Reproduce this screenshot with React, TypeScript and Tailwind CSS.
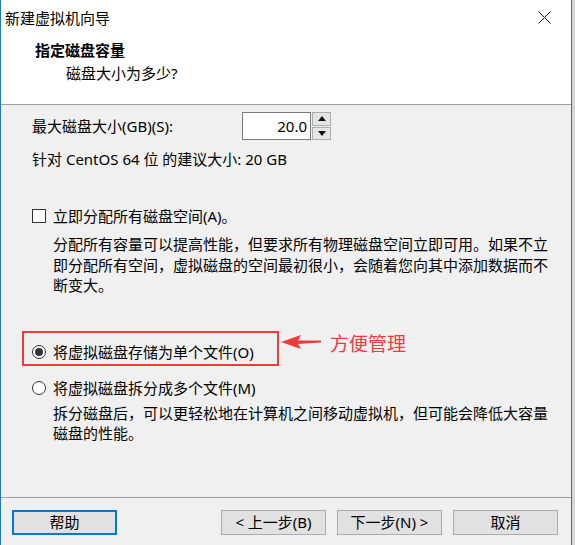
import React from 'react';

const font = { fontFamily: '"Noto Sans", "Noto Sans CJK SC", sans-serif' };

function Btn({ children, primary }: { children: React.ReactNode; primary?: boolean }) {
  return (
    <div
      className={
        'flex h-[25px] w-[105px] items-center justify-center bg-[#e1e1e1] text-[15px] leading-none text-black ' +
        (primary ? 'border-2 border-[#0078d7]' : 'border border-[#adadad]')
      }
    >
      {children}
    </div>
  );
}

function Radio({ checked }: { checked?: boolean }) {
  return (
    <span className="flex h-[14px] w-[14px] shrink-0 items-center justify-center rounded-full border border-[#333] bg-white">
      {checked && <span className="h-[8px] w-[8px] rounded-full bg-[#333]" />}
    </span>
  );
}

export default function App() {
  return (
    <div className="h-[545px] w-[575px] bg-[#d6d6d6]" style={font}>
      <div className="flex h-[545px] w-[572px] flex-col border-x border-[#1979ca] bg-[#f0f0f0]">
        {/* header */}
        <div className="h-[105px] shrink-0 border-b border-[#a0a0a0] bg-white">
          <div className="flex h-[36px] items-center justify-between pl-[4px] pr-[20px]">
            <span className="text-[15px] leading-none text-black">新建虚拟机向导</span>
            <svg width="13" height="13" viewBox="0 0 13 13" className="mt-[-2px]">
              <path d="M0.5 0.5 L12.5 12.5 M12.5 0.5 L0.5 12.5" stroke="#111" strokeWidth="1" />
            </svg>
          </div>
          <div className="mt-[4px] pl-[34px] text-[15px] font-bold leading-[20px] text-black">指定磁盘容量</div>
          <div className="mt-[3px] pl-[65px] text-[15px] leading-[20px] text-black">磁盘大小为多少?</div>
        </div>

        {/* body */}
        <div className="relative flex-1 pl-[31px] text-[15px] leading-[20px] text-black">
          <div className="mt-[7px] flex h-[28px] items-center">
            <span className="w-[210px]">最大磁盘大小(GB)(S):</span>
            <div className="flex h-[28px] w-[69px] items-center justify-end border border-[#7a7a7a] bg-white pr-[3px]">
              20.0
            </div>
            <div className="ml-[1px] flex h-[28px] w-[19px] flex-col gap-[1px]">
              <div className="flex flex-1 items-center justify-center border border-[#adadad] bg-[#e5e5e5]">
                <svg width="8" height="5" viewBox="0 0 8 5"><path d="M0 5 L4 0 L8 5 Z" fill="#111" /></svg>
              </div>
              <div className="flex flex-1 items-center justify-center border border-[#adadad] bg-[#e5e5e5]">
                <svg width="8" height="5" viewBox="0 0 8 5"><path d="M0 0 L4 5 L8 0 Z" fill="#111" /></svg>
              </div>
            </div>
          </div>
          <div className="mt-[9px]">针对 CentOS 64 位 的建议大小: 20 GB</div>

          <div className="mt-[37px] flex items-center gap-[7px]">
            <span className="h-[14px] w-[14px] shrink-0 border border-[#333] bg-white" />
            <span>立即分配所有磁盘空间(A)。</span>
          </div>
          <p className="mt-[8px] pl-[21px] leading-[20.5px]">
            分配所有容量可以提高性能，但要求所有物理磁盘空间立即可用。如果不立
            <br />
            即分配所有空间，虚拟磁盘的空间最初很小，会随着您向其中添加数据而不
            <br />
            断变大。
          </p>

          <div className="relative mt-[46px] flex items-center gap-[7px]">
            <Radio checked />
            <span>将虚拟磁盘存储为单个文件(O)</span>
            <div className="pointer-events-none absolute left-[-10px] top-[-11px] h-[35px] w-[257px] border-2 border-[#f23a3a]" />
            <svg
              className="absolute left-[248px] top-[-9px]"
              width="42"
              height="20"
              viewBox="0 0 42 20"
            >
              <polygon points="1,9 21,2 18,7.5 41,7.5 41,9.5 18,11 21,16" fill="#f23a3a" />
            </svg>
            <span className="absolute left-[298px] top-[-10px] text-[19px] leading-[24px] text-[#f03a3a]">
              方便管理
            </span>
          </div>

          <div className="mt-[16px] flex items-center gap-[7px]">
            <Radio />
            <span>将虚拟磁盘拆分成多个文件(M)</span>
          </div>
          <p className="mt-[5px] pl-[21px] leading-[20.5px]">
            拆分磁盘后，可以更轻松地在计算机之间移动虚拟机，但可能会降低大容量
            <br />
            磁盘的性能。
          </p>
        </div>

        {/* footer */}
        <div className="h-[48px] shrink-0 border-t border-[#a0a0a0]">
          <div className="mt-[12px] flex items-center pl-[11px] pr-[13px]">
            <Btn primary>帮助</Btn>
            <div className="ml-auto flex gap-[11px]">
              <Btn>&lt; 上一步(B)</Btn>
              <Btn>下一步(N) &gt;</Btn>
              <Btn>取消</Btn>
            </div>
          </div>
        </div>
      </div>
    </div>
  );
}
